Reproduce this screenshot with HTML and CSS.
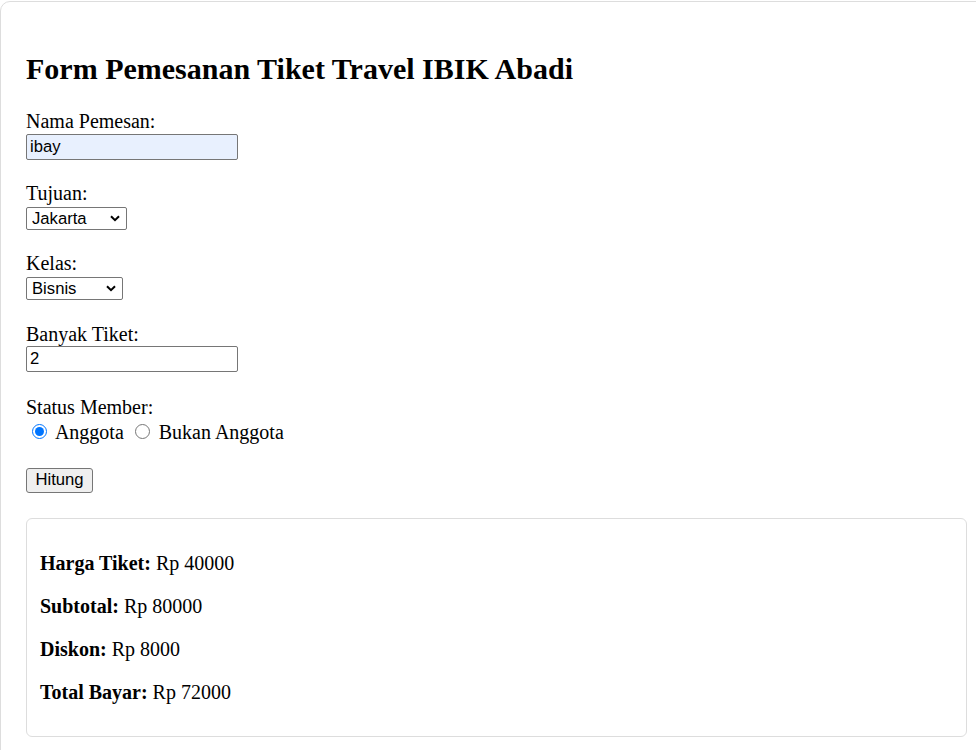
FILE: index.html
```html
<!DOCTYPE html>
<html lang="id">
<head>
<meta charset="utf-8">
<title>Form Pemesanan Tiket Travel IBIK Abadi</title>
<link rel="stylesheet" href="styles.css">
</head>
<body>
<div class="container">
  <h2 class="title">Form Pemesanan Tiket Travel IBIK Abadi</h2>
  <form class="form">
    <div class="field field-nama">
      <label class="label" for="nama">Nama Pemesan:</label>
      <input class="text-input autofill" id="nama" type="text" value="ibay">
    </div>
    <div class="field field-select">
      <label class="label" for="tujuan">Tujuan:</label>
      <span class="select-wrap select-tujuan">
        <select class="select" id="tujuan">
          <option>Jakarta</option>
          <option>Bandung</option>
          <option>Bekasi</option>
        </select>
        <svg class="chevron" width="10" height="7" viewBox="0 0 10 7"><path d="M1 1.2 L5 5.2 L9 1.2" fill="none" stroke="#000" stroke-width="2"/></svg>
      </span>
    </div>
    <div class="field field-select field-kelas">
      <label class="label" for="kelas">Kelas:</label>
      <span class="select-wrap select-kelas">
        <select class="select" id="kelas">
          <option>Bisnis</option>
          <option>Eksekutif</option>
          <option>Ekonomi</option>
        </select>
        <svg class="chevron" width="10" height="7" viewBox="0 0 10 7"><path d="M1 1.2 L5 5.2 L9 1.2" fill="none" stroke="#000" stroke-width="2"/></svg>
      </span>
    </div>
    <div class="field field-tiket">
      <label class="label" for="tiket">Banyak Tiket:</label>
      <input class="text-input" id="tiket" type="text" value="2">
    </div>
    <div class="field field-status">
      <span class="label">Status Member:</span>
      <div class="radio-row">
        <input class="radio" type="radio" name="status" id="anggota" checked><label for="anggota"> Anggota</label>
        <input class="radio" type="radio" name="status" id="bukan"><label for="bukan"> Bukan Anggota</label>
      </div>
    </div>
    <div class="actions">
      <button class="button" type="button">Hitung</button>
    </div>
  </form>
  <div class="result">
    <p class="result-line"><strong>Harga Tiket:</strong> Rp 40000</p>
    <p class="result-line"><strong>Subtotal:</strong> Rp 80000</p>
    <p class="result-line"><strong>Diskon:</strong> Rp 8000</p>
    <p class="result-line"><strong>Total Bayar:</strong> Rp 72000</p>
  </div>
</div>
</body>
</html>
```
FILE: styles.css
```css
html, body {
  overflow: hidden;
}
body {
  margin: 0;
  padding-top: 1px;
  background: #fff;
  color: #000;
  font-family: "Liberation Serif", "Times New Roman", serif;
  font-size: 20px;
  line-height: 23px;
}
.container {
  margin-right: -17px;
  border: 1px solid #dddddd;
  border-radius: 10px;
  padding: 25px;
}
.title {
  margin: 25px 0;
  font-size: 30px;
  line-height: 33px;
  font-weight: bold;
}
.form {
  display: flex;
  flex-direction: column;
  align-items: flex-start;
}
.field {
  display: flex;
  flex-direction: column;
  align-items: flex-start;
}
.field-nama {
  gap: 1px;
  margin-bottom: 22px;
}
.field-select {
  gap: 2px;
  margin-bottom: 22px;
}
.field-kelas {
  margin-bottom: 23px;
}
.field-tiket {
  gap: 0;
  margin-bottom: 24px;
}
.field-status {
  gap: 0;
  margin-bottom: 25px;
}
.label {
  display: block;
  height: 23px;
}
.text-input {
  box-sizing: border-box;
  width: 212px;
  height: 26px;
  margin: 0;
  padding: 0 3px;
  border: 1px solid #767676;
  border-radius: 2px;
  background: #fff;
  color: #000;
  font-family: "Liberation Sans", Arial, sans-serif;
  font-size: 16.67px;
  outline: none;
}
.autofill {
  background: #e8f0fe;
}
.select-wrap {
  position: relative;
  display: inline-block;
}
.select {
  box-sizing: border-box;
  height: 23px;
  margin: 0;
  padding: 0 0 0 5px;
  border: 1px solid #767676;
  border-radius: 2px;
  background: #fff;
  color: #000;
  font-family: "Liberation Sans", Arial, sans-serif;
  font-size: 16.67px;
  line-height: 21px;
  -webkit-appearance: none;
  appearance: none;
  display: block;
}
.select-tujuan .select {
  width: 101px;
}
.select-kelas .select {
  width: 97px;
}
.chevron {
  position: absolute;
  right: 7px;
  top: 8px;
  pointer-events: none;
}
.radio-row {
  height: 21px;
  padding-top: 2px;
  white-space: nowrap;
}
.radio {
  width: 15px;
  height: 15px;
  margin: 3px 4px 0 6px;
  accent-color: #0075ff;
  vertical-align: baseline;
}
.actions {
  margin-bottom: 25px;
}
.button {
  box-sizing: border-box;
  width: 67px;
  height: 25px;
  margin: 0;
  padding: 0;
  border: 1px solid #767676;
  border-radius: 3px;
  background: #efefef;
  color: #000;
  font-family: "Liberation Sans", Arial, sans-serif;
  font-size: 16.67px;
}
.result {
  border: 1px solid #dddddd;
  border-radius: 6px;
  padding: 13px 13px 12px;
}
.result-line {
  margin: 20px 0;
}
```
